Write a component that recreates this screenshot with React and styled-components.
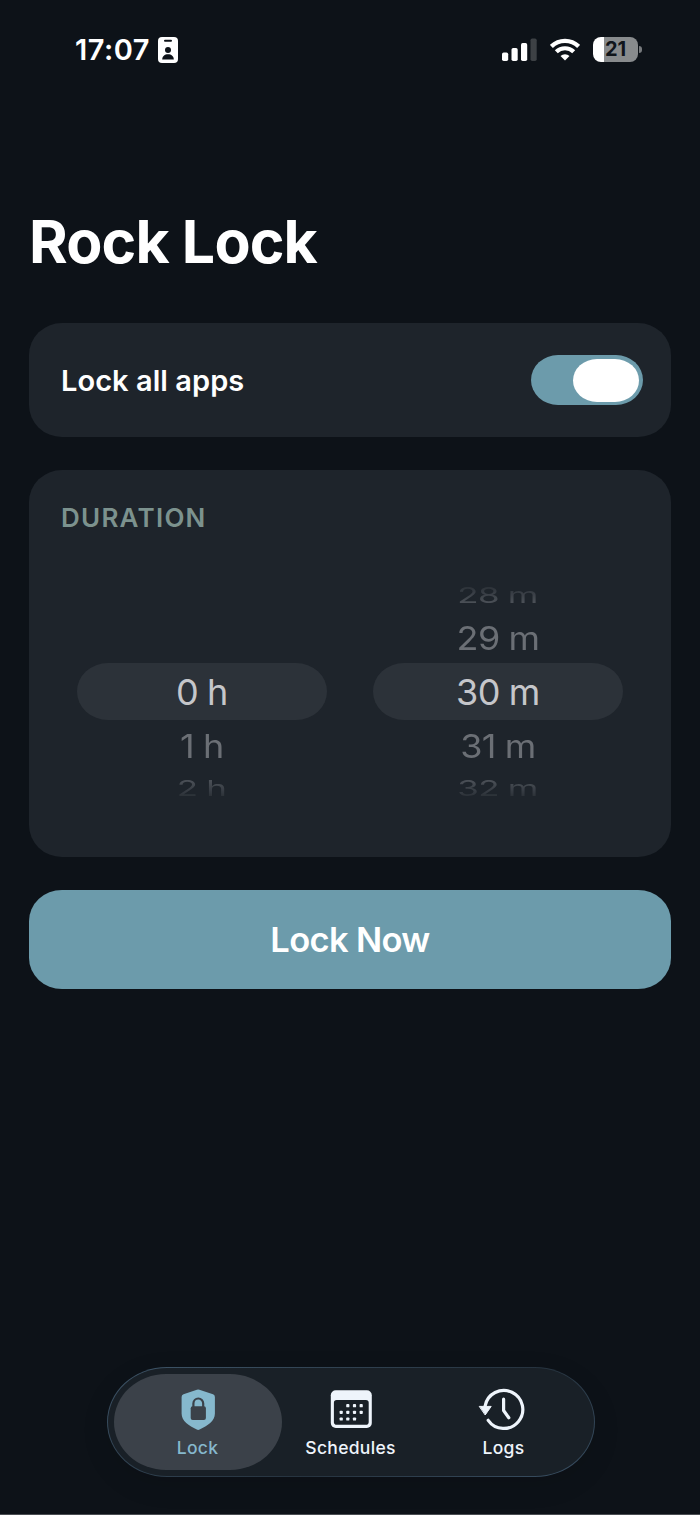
import React, { useState } from 'react';
import styled, { createGlobalStyle, css } from 'styled-components';

const GlobalStyle = createGlobalStyle`
    * {
        box-sizing: border-box;
    }
    body {
        margin: 0;
        background: #0d1218;
        font-family: Inter, 'Liberation Sans', sans-serif;
    }
    button {
        font-family: inherit;
        border: none;
        padding: 0;
        cursor: pointer;
    }
`
const Screen = styled.div`
    display: flex;
    flex-direction: column;
    width: 700px;
    height: 1515px;
    overflow: hidden;
    background: #0d1218;
    border-bottom: 1px solid #4a4d52;
    color: #fff;
`
const StatusBar = styled.header`
    display: flex;
    align-items: center;
    justify-content: space-between;
    height: 99px;
    padding: 0 58px 0 75px;
`
const StatusGroup = styled.div`
    display: flex;
    align-items: center;
    gap: ${props => props.$gap}px;
`
const Time = styled.span`
    font-size: 29px;
    font-weight: 600;
    line-height: 36px;
    letter-spacing: 0.5px;
`
const Battery = styled.div`
    display: flex;
    align-items: center;
    gap: 1px;
`
const BatteryBody = styled.div`
    display: flex;
    align-items: center;
    justify-content: center;
    width: 45px;
    height: 25px;
    border-radius: 8px;
    background: linear-gradient(to right, #fff 10.5px, #888b8d 10.5px);
    color: #10151b;
    font-size: 20px;
    font-weight: 700;
    line-height: 25px;
`
const BatteryCap = styled.div`
    width: 3px;
    height: 7px;
    border-radius: 0 3px 3px 0;
    background: #777a7d;
`
const Main = styled.main`
    display: flex;
    flex-direction: column;
    flex: 1;
    padding: 107px 29px 0;
`
const Title = styled.h1`
    margin: 0 0 46px;
    height: 71px;
    line-height: 71px;
    font-size: 59px;
    font-weight: 700;
    letter-spacing: -0.85px;
`
const card = css`
    background: #1e242b;
    border-radius: 33px / 32px;
`
const ToggleCard = styled.section`
    ${card}
    display: flex;
    align-items: center;
    justify-content: space-between;
    height: 114px;
    padding: 0 28px 0 32px;
    margin-bottom: 33px;
`
const ToggleLabel = styled.span`
    padding-top: 2px;
    font-size: 29px;
    font-weight: 600;
    line-height: 36px;
    letter-spacing: 0.05px;
`
const Switch = styled.button`
    display: flex;
    align-items: center;
    justify-content: ${props => props.$on ? 'flex-end' : 'flex-start'};
    width: 112.5px;
    height: 50px;
    padding: 0 4px;
    border-radius: 27px / 25px;
    background: ${props => props.$on ? '#6c9bab' : '#3a4048'};
`
const Knob = styled.span`
    width: 66px;
    height: 43px;
    border-radius: 24px / 21.5px;
    background: #fff;
`
const DurationCard = styled.section`
    ${card}
    height: 387px;
    margin-bottom: 33px;
    padding: 32px 48px 0;
`
const SectionLabel = styled.h2`
    margin: 0 0 44px -16px;
    height: 32px;
    line-height: 32px;
    font-size: 26px;
    font-weight: 600;
    letter-spacing: 1.25px;
    color: #7c928e;
`
const Wheels = styled.div`
    display: flex;
    justify-content: space-between;
`
const Wheel = styled.div`
    display: flex;
    flex-direction: column;
    width: 250px;
`
// rows shrink and fade the further they are from the selected one
const rowLook = {
    0: { height: 57, scale: '1, 1', color: '#c5c6ca' },
    1: { height: 51, scale: '1, 0.9', color: '#6b6f75' },
    2: { height: 34, scale: '0.97, 0.6', color: '#4a4f56' },
}
const WheelRow = styled.div`
    display: flex;
    align-items: center;
    justify-content: center;
    height: ${props => rowLook[Math.abs(props.$offset)].height}px;
    color: ${props => rowLook[Math.abs(props.$offset)].color};
    font-size: 36px;
    letter-spacing: -0.5px;
    ${props => props.$offset === 0 && css`
        background: #2c3239;
        border-radius: 31px / 28.5px;
    `}
    ${props => props.$offset === -2 && css`
        mask-image: linear-gradient(to bottom, transparent 5%, #000 70%);
    `}
    ${props => props.$offset === 2 && css`
        mask-image: linear-gradient(to top, transparent 5%, #000 70%);
    `}

    span {
        line-height: 40px;
        white-space: pre;
        word-spacing: -0.8px;
        transform: scale(${props => rowLook[Math.abs(props.$offset)].scale});
    }
`
const LockButton = styled.button`
    height: 99px;
    border-radius: 33px / 31px;
    background: #6c9bab;
    color: #fff;
    font-size: 34.5px;
    font-weight: 600;
    letter-spacing: -0.65px;
`
const TabBar = styled.nav`
    display: grid;
    grid-template-columns: repeat(3, 153px);
    align-self: center;
    width: 488px;
    height: 110px;
    margin: 0 0 37px 2px;
    padding: 5.5px 0 0 13px;
    border: 1.5px solid transparent;
    border-radius: 60px / 55px;
    background:
        linear-gradient(#192027, #192027) padding-box,
        linear-gradient(155deg, #3f566a 0%, #2f404f 35%, #26333f 60%, #3a5064 100%) border-box;
    box-shadow: 0 8px 28px rgba(0, 0, 0, 0.1);
`
const Tab = styled.button`
    display: flex;
    flex-direction: column;
    align-items: center;
    height: 96px;
    margin: 0 -7.5px;
    padding-top: 14px;
    border-radius: 52px / 48px;
    background: ${props => props.$active ? '#3b4149' : 'transparent'};
    color: ${props => props.$active ? '#86b8cd' : '#eef4fb'};
`
const TabLabel = styled.span`
    margin-top: 4px;
    line-height: 24px;
    font-size: 17.5px;
    font-weight: 500;
    letter-spacing: 0.3px;
`

const BadgeIcon = () => (
    <svg width="20" height="26" viewBox="0 0 20 26">
        <rect width="20" height="26" rx="4" fill="#fff" />
        <rect x="6" y="2.8" width="8" height="2" rx="1" fill="#0d1218" />
        <circle cx="10" cy="13" r="3" fill="#0d1218" />
        <path d="M4.2 22.5c0-3.3 2.4-5.3 5.8-5.3s5.8 2 5.8 5.3z" fill="#0d1218" />
    </svg>
)

const SignalIcon = () => (
    <svg width="35" height="24" viewBox="0 0 35 24" fill="#fff">
        <rect x="0" y="14.5" width="6.2" height="8.5" rx="1.7" />
        <rect x="9.5" y="10" width="6.2" height="13" rx="1.7" />
        <rect x="19" y="5" width="6.2" height="18" rx="1.7" />
        <rect x="28.5" y="0.5" width="6.2" height="22.5" rx="1.7" fill="#3d4145" />
    </svg>
)

const WifiIcon = () => (
    <svg width="30" height="23" viewBox="0 0 30 23" fill="none" stroke="#fff" strokeWidth="4.2">
        <path d="M1.4 8.4a19.4 19.4 0 0 1 27.2 0" />
        <path d="M6.3 13.8a12.4 12.4 0 0 1 17.4 0" />
        <path d="M15 22.6l-4.5-4.6a6.5 6.5 0 0 1 9 0z" fill="#fff" stroke="none" />
    </svg>
)

const ShieldIcon = () => (
    <svg width="44" height="44" viewBox="0 0 44 44">
        <path
            d="M20.9 1.7Q22.1 1.1 23.4 1.7L37 6.3Q38.9 7 38.9 9V25.5C38.9 33 31.5 37.8 23.6 41.6Q22.2 42.3 20.8 41.6C12.9 37.8 5.6 33 5.6 25.5V9Q5.6 7 7.5 6.3Z"
            fill="#86b8cd"
        />
        <rect x="14.7" y="18.3" width="15.2" height="13.7" rx="2" fill="#3b4149" />
        <path d="M17.4 19v-3.4a4.9 5.1 0 0 1 9.8 0v3.4" fill="none" stroke="#3b4149" strokeWidth="2.2" />
    </svg>
)

const dots = [
    [18.8, 17.7], [25.5, 17.7], [32.2, 17.7],
    [12.2, 24.3], [18.8, 24.3], [25.5, 24.3], [32.2, 24.3],
    [12.2, 31], [18.8, 31], [25.5, 31],
]

const CalendarIcon = () => (
    <svg width="44" height="44" viewBox="0 0 44 44" fill="#eef4fb">
        <rect x="1.8" y="2.3" width="41" height="37.7" rx="5" />
        <rect x="4.9" y="12" width="34.8" height="24.7" rx="2.8" fill="#192027" />
        {dots.map(([x, y]) => (
            <rect key={`${x}-${y}`} x={x - 1.6} y={y - 1.6} width="3.2" height="3.2" rx="0.9" />
        ))}
    </svg>
)

const HistoryIcon = () => (
    <svg width="54" height="44" viewBox="0 0 54 44" fill="none" stroke="#eef4fb" strokeWidth="3.2" strokeLinecap="round" strokeLinejoin="round">
        <path d="M11.2 32.3A19 19 0 1 0 8.1 18" />
        <path d="M26.6 11.2V22.5L31.8 29.7" />
        <path d="M2.6 18.4H14.2L8.4 26.7Z" fill="#eef4fb" strokeWidth="1" />
    </svg>
)

const hours = [null, null, '0 h', '1 h', '2 h']
const minutes = ['28 m', '29 m', '30 m', '31 m', '32 m']

const tabs = [
    { name: 'Lock', Icon: ShieldIcon },
    { name: 'Schedules', Icon: CalendarIcon },
    { name: 'Logs', Icon: HistoryIcon },
]

function PickerWheel({ rows }) {
    return (
        <Wheel>
            {rows.map((row, i) => (
                <WheelRow key={i} $offset={i - 2}>
                    <span>{row}</span>
                </WheelRow>
            ))}
        </Wheel>
    )
}

export default function App() {
    const [lockAll, setLockAll] = useState(true)
    const [active, setActive] = useState('Lock')

    return (
        <Screen>
            <GlobalStyle />
            <StatusBar>
                <StatusGroup $gap={8}>
                    <Time>17:07</Time>
                    <BadgeIcon />
                </StatusGroup>
                <StatusGroup $gap={13}>
                    <SignalIcon />
                    <WifiIcon />
                    <Battery>
                        <BatteryBody>21</BatteryBody>
                        <BatteryCap />
                    </Battery>
                </StatusGroup>
            </StatusBar>
            <Main>
                <Title>Rock Lock</Title>
                <ToggleCard>
                    <ToggleLabel>Lock all apps</ToggleLabel>
                    <Switch
                        type="button"
                        role="switch"
                        aria-checked={lockAll}
                        aria-label="Lock all apps"
                        $on={lockAll}
                        onClick={() => setLockAll(!lockAll)}
                    >
                        <Knob />
                    </Switch>
                </ToggleCard>
                <DurationCard>
                    <SectionLabel>DURATION</SectionLabel>
                    <Wheels>
                        <PickerWheel rows={hours} />
                        <PickerWheel rows={minutes} />
                    </Wheels>
                </DurationCard>
                <LockButton type="button">Lock Now</LockButton>
            </Main>
            <TabBar>
                {tabs.map(({ name, Icon }) => (
                    <Tab key={name} type="button" $active={active === name} onClick={() => setActive(name)}>
                        <Icon />
                        <TabLabel>{name}</TabLabel>
                    </Tab>
                ))}
            </TabBar>
        </Screen>
    )
}
